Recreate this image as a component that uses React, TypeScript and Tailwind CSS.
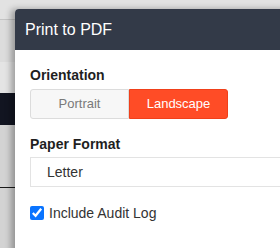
import React from "react";

export default function App() {
  return (
    <div className="relative w-[280px] h-[248px] overflow-hidden bg-[#d3d3d3] font-['Liberation_Sans',Arial,sans-serif]">
      {/* page behind the modal */}
      <div className="flex flex-col">
        <div className="h-[19px] bg-[#e2e2e2]" />
        <div className="h-px bg-[#c4c4c4]" />
        <div className="h-[42px] bg-[#dcdcdc]" />
        <div className="h-[31px] bg-[#e4e4e4]" />
        <div className="h-[32px] bg-[#121521]" />
        <div className="h-[62px] bg-[#d3d3d3]" />
        <div className="h-px bg-[#1a1a1a]" />
        <div className="h-[60px] bg-[#d3d3d3]" />
      </div>

      {/* modal */}
      <div className="absolute left-[15px] top-[9px] w-[320px] h-[300px] rounded-tl-[4px] bg-white shadow-[-4px_0_6px_rgba(0,0,0,0.3)] overflow-hidden">
        <div className="h-[41px] bg-[#333a48] flex items-center px-[10px]">
          <span className="text-white text-[16px]">Print to PDF</span>
        </div>

        <div className="px-[15px] pt-[15px]">
          <div className="text-[14px] leading-[20px] font-bold text-[#1f1f1f]">Orientation</div>
          <div className="mt-[4px] flex w-[198px] h-[30px] text-[13px]">
            <button className="flex-1 flex items-center justify-center rounded-l-[3px] border border-[#dcdcdc] bg-[#f7f7f7] text-[#7a7a7a]">
              Portrait
            </button>
            <button className="flex-1 flex items-center justify-center rounded-r-[3px] border border-[#f0401a] bg-[#ff4c26] text-white">
              Landscape
            </button>
          </div>

          <div className="mt-[15px] text-[14px] leading-[20px] font-bold text-[#1f1f1f]">Paper Format</div>
          <div className="mt-[3px] h-[30px] w-[320px] border border-[#e3e3e3] flex items-center pl-[16px] text-[14px] text-[#333]">
            Letter
          </div>

          <label className="mt-[16px] flex items-center gap-[5px] h-[20px] text-[14px] text-[#333]">
            <input type="checkbox" defaultChecked className="m-0 w-[14px] h-[14px] accent-[#0a74ff]" />
            <span>Include Audit Log</span>
          </label>
        </div>
      </div>
    </div>
  );
}
